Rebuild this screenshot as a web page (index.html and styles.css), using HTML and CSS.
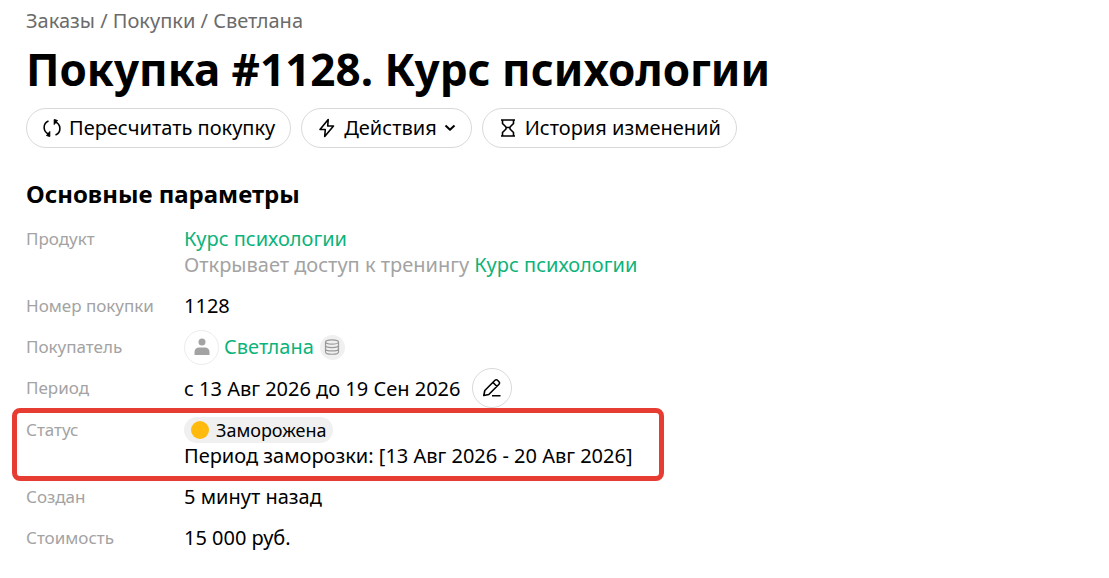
FILE: index.html
```
<!DOCTYPE html>
<html lang="ru">
<head>
    <meta charset="UTF-8">
    <meta name="viewport" content="width=device-width, initial-scale=1.0">
    <title>Покупка #1128. Курс психологии</title>
    <link rel="stylesheet" href="styles.css">
</head>
<body>
    <main class="page">
        <nav class="breadcrumbs">
            <a href="#">Заказы</a> / <a href="#">Покупки</a> / <a href="#">Светлана</a>
        </nav>

        <h1>Покупка #1128. Курс психологии</h1>

        <div class="actions">
            <button type="button" class="btn">
                <svg class="icon" viewBox="0 0 20 20">
                    <path d="M6.500 3C0.500 5.500 0.500 14 7.500 16.500"/>
                    <path d="M7.800 13.500V18.500L4.500 17.500z" fill="currentColor" stroke-width="1"/>
                    <path d="M13.500 17C19.500 14.500 19.500 6 12.500 3.500"/>
                    <path d="M12.200 6.500V1.500L15.500 2.500z" fill="currentColor" stroke-width="1"/>
                </svg>
                Пересчитать покупку
            </button>
            <button type="button" class="btn">
                <svg class="icon" viewBox="0 0 20 20">
                    <path d="M11.200 1.500L3 11.500h5.300l-0.600 7 8.800-10.500h-5.800z"/>
                </svg>
                Действия
                <svg class="chevron" viewBox="0 0 12 12"><path d="M1.500 3.500L6 7.800l4.500-4.300"/></svg>
            </button>
            <button type="button" class="btn">
                <svg class="icon" viewBox="0 0 20 20">
                    <path d="M3 2h14M3 18h14M4.500 2v3.500L8 9v2l-3.500 3.500V18M15.500 2v3.500L12 9v2l3.500 3.500V18M8 9.500h4"/>
                </svg>
                История изменений
            </button>
        </div>

        <h2>Основные параметры</h2>

        <dl class="params">
            <div class="row">
                <dt>Продукт</dt>
                <dd>
                    <a href="#">Курс психологии</a>
                    <div class="note">Открывает доступ к тренингу <a href="#">Курс психологии</a></div>
                </dd>
            </div>
            <div class="row">
                <dt>Номер покупки</dt>
                <dd>1128</dd>
            </div>
            <div class="row">
                <dt>Покупатель</dt>
                <dd class="inline">
                    <span class="avatar">
                        <svg viewBox="0 0 16 18"><circle cx="8" cy="4" r="3.500"/><path d="M0.500 17v-3c0-3 2-4.500 4.500-4.500h6c2.500 0 4.500 1.500 4.500 4.500v3z"/></svg>
                    </span>
                    <a href="#">Светлана</a>
                    <span class="db">
                        <svg viewBox="0 0 16 16">
                            <ellipse cx="8" cy="3" rx="6.500" ry="2.200"/>
                            <path d="M1.500 3v10c0 3 13 3 13 0V3M1.500 6.300c0 3 13 3 13 0M1.500 9.700c0 3 13 3 13 0"/>
                        </svg>
                    </span>
                </dd>
            </div>
            <div class="row">
                <dt>Период</dt>
                <dd class="inline">
                    с 13 Авг 2026 до 19 Сен 2026
                    <button type="button" class="edit" aria-label="Изменить период">
                        <svg class="icon" viewBox="0 0 20 20">
                            <path d="M1.800 17.500l1-5L13 2.300c0.800-0.800 1.800-0.800 2.500 0l1.500 1.500c0.800 0.800 0.800 1.700 0 2.500L6.800 16.500zM11 4.500l4 4M10 17.800h8.500"/>
                        </svg>
                    </button>
                </dd>
            </div>
            <div class="row highlighted">
                <dt>Статус</dt>
                <dd>
                    <span class="status">Заморожена</span>
                    <div>Период заморозки: [13 Авг 2026 - 20 Авг 2026]</div>
                </dd>
            </div>
            <div class="row">
                <dt>Создан</dt>
                <dd>5 минут назад</dd>
            </div>
            <div class="row">
                <dt>Стоимость</dt>
                <dd>15 000 руб.</dd>
            </div>
        </dl>
    </main>
</body>
</html>
```
FILE: styles.css
```
* {
    box-sizing: border-box;
}
body {
    margin: 0;
    background: #fff;
    color: #000;
    font-family: "Noto Sans", sans-serif;
    font-size: 20px;
    line-height: 26px;
}
.page {
    padding: 8px 26px;
}
a {
    color: #0cb37a;
    text-decoration: none;
}
.breadcrumbs {
    color: #6b6b6b;
}
.breadcrumbs a {
    color: inherit;
}
h1 {
    margin: 7px 0 11px;
    font-size: 44px;
    line-height: 56px;
}
h2 {
    margin: 30px 0 16px;
    font-size: 24px;
    line-height: 32px;
}
.actions {
    display: flex;
    flex-wrap: wrap;
    gap: 10px;
}
.btn {
    display: flex;
    align-items: center;
    gap: 7px;
    height: 40px;
    padding: 0 15px;
    border: 1px solid #d9d9d9;
    border-radius: 20px;
    background: #fff;
    color: #000;
    font: inherit;
    cursor: pointer;
}
svg {
    fill: none;
    stroke: currentColor;
    stroke-width: 2;
    stroke-linejoin: round;
}
.icon {
    width: 20px;
    height: 20px;
    stroke-width: 1.6;
}
.chevron {
    width: 12px;
    height: 12px;
}
.params {
    display: flex;
    flex-direction: column;
    gap: 15px;
    max-width: 624px;
    margin: 0;
}
.row {
    display: grid;
    grid-template-columns: 158px 1fr;
    position: relative;
}
dt {
    color: #a3a3a3;
    font-size: 17px;
}
dd {
    margin: 0;
    white-space: nowrap;
}
.inline {
    display: flex;
    align-items: center;
}
.note {
    color: #a3a3a3;
}
/* round elements are taller than the text line, so they must not stretch the row */
.avatar, .edit, .db {
    display: flex;
    align-items: center;
    justify-content: center;
    border-radius: 50%;
}
.avatar {
    width: 35px;
    height: 35px;
    margin: -5px 5px -5px 0;
    border: 1px solid #ececec;
}
.avatar svg {
    width: 16px;
    height: 18px;
    fill: #a3a3a3;
    stroke: none;
}
.db {
    width: 25px;
    height: 25px;
    margin-left: 6px;
    background: #f0f0f0;
    color: #999;
}
.db svg {
    width: 16px;
    height: 16px;
    stroke-width: 1.2;
}
.edit {
    width: 40px;
    height: 40px;
    margin: -7px 0 -6px 12px;
    padding: 0;
    border: 1px solid #d9d9d9;
    background: #fff;
    color: #000;
    cursor: pointer;
}
.status {
    display: flex;
    align-items: center;
    gap: 7px;
    width: fit-content;
    padding: 0 7px;
    border-radius: 13px;
    background: #f0f0f0;
    font-size: 18px;
}
.status::before {
    content: "";
    width: 18px;
    height: 18px;
    border-radius: 50%;
    background: #ffba0d;
}
/* red frame around the row */
.highlighted::after {
    content: "";
    position: absolute;
    inset: -9px -14px -12px;
    border: 5px solid #e63c32;
    border-radius: 8px;
    pointer-events: none;
}
```
